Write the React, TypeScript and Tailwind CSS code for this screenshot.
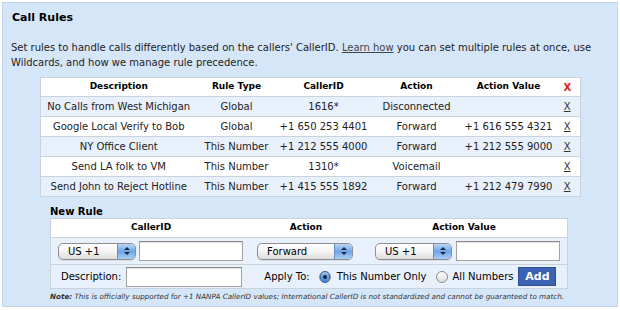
import React from 'react';

const rules = [
  { desc: 'No Calls from West Michigan', type: 'Global', caller: '1616*', action: 'Disconnected', value: '' },
  { desc: 'Google Local Verify to Bob', type: 'Global', caller: '+1 650 253 4401', action: 'Forward', value: '+1 616 555 4321' },
  { desc: 'NY Office Client', type: 'This Number', caller: '+1 212 555 4000', action: 'Forward', value: '+1 212 555 9000' },
  { desc: 'Send LA folk to VM', type: 'This Number', caller: '1310*', action: 'Voicemail', value: '' },
  { desc: 'Send John to Reject Hotline', type: 'This Number', caller: '+1 415 555 1892', action: 'Forward', value: '+1 212 479 7990' },
];

function Select({ label, width }: { label: string; width: string }) {
  return (
    <div className={`${width} h-[17px] flex items-stretch rounded-[5px] border border-[#8e8e8e] bg-gradient-to-b from-white via-[#f4f4f4] to-[#dcdcdc] overflow-hidden shadow-[0_1px_0_rgba(0,0,0,0.08)]`}>
      <span className="flex-1 pl-[9px] text-[10px] leading-[15px] text-black">{label}</span>
      <span className="w-[18px] flex flex-col items-center justify-center gap-[2px] border-l border-[#6d8fc0] bg-gradient-to-b from-[#b9d6f6] via-[#6fa5e6] to-[#a9cdf3]">
        <svg width="6" height="3" viewBox="0 0 6 3"><path d="M0 3 L3 0 L6 3 Z" fill="#1b2b45" /></svg>
        <svg width="6" height="3" viewBox="0 0 6 3"><path d="M0 0 L3 3 L6 0 Z" fill="#1b2b45" /></svg>
      </span>
    </div>
  );
}

function TextInput({ width }: { width: string }) {
  return <div className={`${width} h-[20px] bg-white border border-[#a3a3a3] border-t-[#8a8a8a] shadow-[inset_0_1px_1px_rgba(0,0,0,0.12)]`} />;
}

function Radio({ checked }: { checked?: boolean }) {
  return (
    <span className="w-[12px] h-[12px] rounded-full border border-[#8c8c8c] bg-gradient-to-b from-white to-[#dedede] flex items-center justify-center">
      {checked && <span className="w-[12px] h-[12px] rounded-full bg-gradient-to-b from-[#9cc4f0] to-[#3d83d6] border border-[#3d6aa8] flex items-center justify-center"><span className="w-[4px] h-[4px] rounded-full bg-[#10213d]" /></span>}
    </span>
  );
}

export default function App() {
  return (
    <div className="w-[620px] h-[310px] bg-white p-[2px] text-[#222] font-['DejaVu_Sans','Verdana',sans-serif]">
      <div className="h-[305px] border border-[#c3d5ec] bg-[#d6e6f9] pl-[8px] pt-[8px]">
        <h2 className="text-[11px] font-bold leading-[14px] pl-[1px] text-black">Call Rules</h2>
        <p className="mt-[15px] text-[10px] leading-[15px] text-[#222] w-[600px]">
          Set rules to handle calls differently based on the callers' CallerID. <span className="underline text-[#444]">Learn how</span> you can set multiple rules at once, use Wildcards, and how we manage rule precedence.
        </p>

        <table className="ml-[29px] mt-[7px] w-[540px] border border-[#c9d3de] border-collapse text-[10px] table-fixed">
          <colgroup>
            <col className="w-[156px]" />
            <col className="w-[80px]" />
            <col className="w-[94px]" />
            <col className="w-[92px]" />
            <col className="w-[92px]" />
            <col className="w-[26px]" />
          </colgroup>
          <thead>
            <tr className="bg-white h-[19px] text-[9px] text-black">
              <th className="font-bold">Description</th>
              <th className="font-bold">Rule Type</th>
              <th className="font-bold">CallerID</th>
              <th className="font-bold">Action</th>
              <th className="font-bold">Action Value</th>
              <th className="font-bold text-[10px] text-[#e0211b]">X</th>
            </tr>
          </thead>
          <tbody>
            {rules.map((r, i) => (
              <tr key={r.desc} className={`h-[20px] border-t border-[#c9d3de] text-center whitespace-nowrap ${i % 2 === 0 ? 'bg-[#e8f0fb]' : 'bg-white'}`}>
                <td>{r.desc}</td>
                <td>{r.type}</td>
                <td>{r.caller}</td>
                <td>{r.action}</td>
                <td>{r.value}</td>
                <td className="underline text-[#333]">X</td>
              </tr>
            ))}
          </tbody>
        </table>

        <div className="ml-[39px] mt-[8px] w-[518px]">
          <div className="text-[10px] font-bold text-black leading-[13px]">New Rule</div>
          <div className="border border-[#c9d3de] text-[10px] whitespace-nowrap">
            <div className="grid grid-cols-[200px_110px_1fr] h-[18px] bg-white text-[9px] font-bold text-black items-center text-center">
              <span>CallerID</span>
              <span>Action</span>
              <span>Action Value</span>
            </div>
            <div className="flex items-center h-[27px] bg-[#e8f0fb] border-t border-[#c9d3de] pl-[7px]">
              <Select label="US +1" width="w-[78px]" />
              <div className="ml-[3px]"><TextInput width="w-[104px]" /></div>
              <div className="ml-[14px]"><Select label="Forward" width="w-[96px]" /></div>
              <div className="ml-[22px]"><Select label="US +1" width="w-[77px]" /></div>
              <div className="ml-[4px]"><TextInput width="w-[104px]" /></div>
            </div>
            <div className="flex items-center h-[24px] bg-[#e8f0fb] border-t border-[#c9d3de] pl-[10px] text-black">
              <span>Description:</span>
              <div className="ml-[5px]"><TextInput width="w-[116px]" /></div>
              <span className="ml-[22px]">Apply To:</span>
              <span className="ml-[9px]"><Radio checked /></span>
              <span className="ml-[6px]">This Number Only</span>
              <span className="ml-[9px]"><Radio /></span>
              <span className="ml-[5px]">All Numbers</span>
              <button className="ml-[5px] w-[38px] h-[19px] bg-[#3c62b4] border border-[#2f4f97] text-white font-bold text-[11px] leading-[17px]">Add</button>
            </div>
          </div>
          <p className="mt-[3px] text-[7.2px] italic text-[#333] leading-[9px] whitespace-nowrap">
            <b>Note:</b> This is officially supported for +1 NANPA CallerID values; International CallerID is not standardized and cannot be guaranteed to match.
          </p>
        </div>
      </div>
    </div>
  );
}
